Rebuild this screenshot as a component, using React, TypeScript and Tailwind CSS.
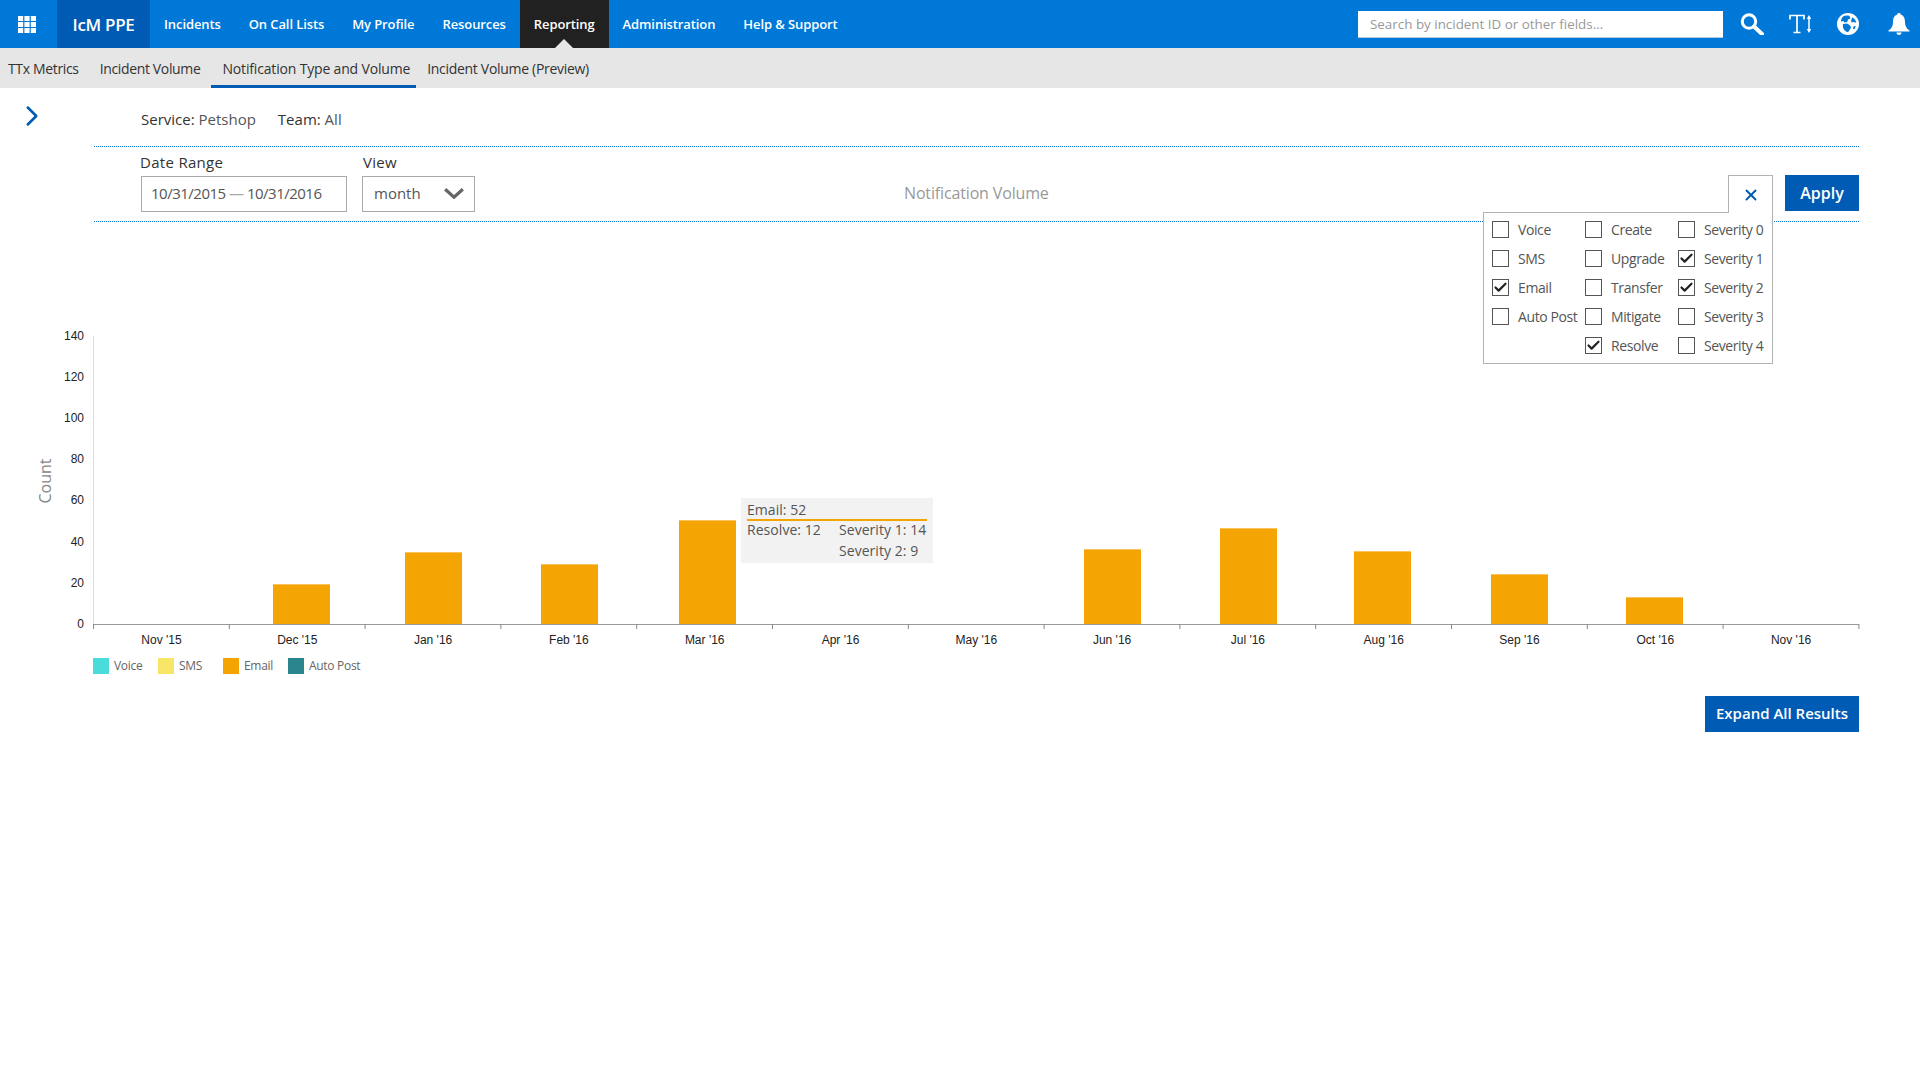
import { ChevronRight, X, Check } from 'lucide-react';

const navItems = ['Incidents', 'On Call Lists', 'My Profile', 'Resources', 'Reporting', 'Administration', 'Help & Support'];
const subItems = ['TTx Metrics', 'Incident Volume', 'Notification Type and Volume', 'Incident Volume (Preview)'];

const months = ["Nov '15", "Dec '15", "Jan '16", "Feb '16", "Mar '16", "Apr '16", "May '16", "Jun '16", "Jul '16", "Aug '16", "Sep '16", "Oct '16", "Nov '16"];
const bars = [
  { x: 273, top: 584 },
  { x: 405, top: 552 },
  { x: 541, top: 564 },
  { x: 679, top: 520 },
  { x: 1084, top: 549 },
  { x: 1220, top: 528 },
  { x: 1354, top: 551 },
  { x: 1491, top: 574 },
  { x: 1626, top: 597 },
];

const legend = [
  { label: 'Voice', color: 'bg-[#4adbdb]' },
  { label: 'SMS', color: 'bg-[#f7e668]' },
  { label: 'Email', color: 'bg-[#f5a503]' },
  { label: 'Auto Post', color: 'bg-[#2b858f]' },
];

const filters = [
  [{ label: 'Voice' }, { label: 'SMS' }, { label: 'Email', on: true }, { label: 'Auto Post' }],
  [{ label: 'Create' }, { label: 'Upgrade' }, { label: 'Transfer' }, { label: 'Mitigate' }, { label: 'Resolve', on: true }],
  [{ label: 'Severity 0' }, { label: 'Severity 1', on: true }, { label: 'Severity 2', on: true }, { label: 'Severity 3' }, { label: 'Severity 4' }],
];

const Waffle = () => (
  <svg width="18" height="17" viewBox="0 0 18 17" fill="white">
    {[0, 6, 12].map((y) =>
      [0, 6.4, 12.8].map((x) => <rect key={`${x}-${y}`} x={x} y={y} width="5.2" height="5" />),
    )}
  </svg>
);

const SearchIcon = () => (
  <svg width="24" height="22" viewBox="0 0 24 22" fill="none" stroke="white">
    <circle cx="9" cy="8.5" r="6.7" strokeWidth="3" />
    <path d="M14 13.5 L22 21" strokeWidth="4" strokeLinecap="round" />
  </svg>
);

const TextSizeIcon = () => (
  <svg width="24" height="20" viewBox="0 0 24 20" fill="none" stroke="white">
    <path d="M1 5.5V1.5H15V5.5M8 1.5V18.5M4.5 18.5H11.5" strokeWidth="1.7" />
    <path d="M20 3V17" strokeWidth="1.5" />
    <path d="M17.8 5L20 1L22.2 5ZM17.8 15L20 19L22.2 15Z" fill="white" stroke="none" />
  </svg>
);

const GlobeIcon = () => (
  <svg width="22" height="22" viewBox="0 0 22 22">
    <circle cx="11" cy="11" r="11" fill="white" />
    <path d="M6 3.6C8 2.4 10.5 2.2 12.5 3L13.5 5.5L11 6.5L10.2 9L7.5 9.5L6.5 8L4 8.5C4 6.6 4.8 4.8 6 3.6Z" fill="#0078d7" />
    <path d="M6 11L10 10.6L13.2 12.4L14 14.4L12.6 17L11 19.2C7.6 18.6 5.2 15 6 11Z" fill="#0078d7" />
    <path d="M15.4 4.2L18 6.4L19.4 9.8L16.6 9L14.4 9.4L14.2 7ZM16.4 13.4L18.8 13L17.6 16.2L16 15.8Z" fill="#0078d7" />
  </svg>
);

const BellIcon = () => (
  <svg width="22" height="22" viewBox="0 0 22 22" fill="white">
    <circle cx="11" cy="2" r="2" />
    <path d="M11 1.5C15.5 1.5 17 5 17 9C17 13 18.5 15.5 21.5 17.5V18.5H0.5V17.5C3.5 15.5 5 13 5 9C5 5 6.5 1.5 11 1.5Z" />
    <path d="M8.5 19.5H13.5C13.5 21 12.5 22 11 22C9.5 22 8.5 21 8.5 19.5Z" />
  </svg>
);

const ViewCaret = () => (
  <svg width="20" height="11" viewBox="0 0 20 11" fill="none" stroke="#666" strokeWidth="3.2">
    <path d="M1.2 1.2L10 9.2L18.8 1.2" />
  </svg>
);

const Box = ({ label, on }: { label: string; on?: boolean }) => (
  <div className="flex items-center h-[29px]">
    <div className="w-[17px] h-[17px] border-[1.5px] border-[#555] flex items-center justify-center">
      {on && <Check size={15} strokeWidth={3.5} className="text-[#222]" />}
    </div>
    <span className="ml-[9px] text-[14px] text-[#555] tracking-[-0.4px] whitespace-nowrap">{label}</span>
  </div>
);

const Chart = () => (
  <svg width="1920" height="330" viewBox="0 320 1920 330" className="block">
    <line x1="93.5" y1="336" x2="93.5" y2="624" stroke="#ddd" />
    {[140, 120, 100, 80, 60, 40, 20, 0].map((v, i) => (
      <text key={v} x="84" y={339.5 + i * 41.2} textAnchor="end" fontSize="12" fill="#222" fontFamily="'Liberation Sans', sans-serif">
        {v}
      </text>
    ))}
    <text transform="translate(51 481) rotate(-90)" textAnchor="middle" fontSize="16" fill="#888" fontFamily="'Open Sans', sans-serif">
      Count
    </text>
    {bars.map((b) => (
      <g key={b.x}>
        <rect x={b.x} y={b.top} width="57" height={624 - b.top} fill="#f5a503" />
        <rect x={b.x} y={b.top} width="57" height="1" fill="#fac35c" />
      </g>
    ))}
    <line x1="93" y1="624.5" x2="1859" y2="624.5" stroke="#999" strokeWidth="1" />
    {months.concat('').map((m, i) => {
      const x = 93.5 + i * 135.8;
      return (
        <g key={i}>
          <line x1={x} y1="624" x2={x} y2="629" stroke="#888" />
          {m && (
            <text x={x + 68} y="644" textAnchor="middle" fontSize="12" fill="#222" fontFamily="'Liberation Sans', sans-serif">
              {m}
            </text>
          )}
        </g>
      );
    })}
  </svg>
);

export default function App() {
  return (
    <div className="min-h-[1080px] bg-white font-['Open_Sans',sans-serif]">
      <header className="flex items-center h-12 bg-[#0078d7] text-white">
        <div className="w-[57px] flex pl-[18px]">
          <Waffle />
        </div>
        <div className="w-[93px] h-12 bg-[#005bb5] flex items-center justify-center pt-[1px] text-[17px] font-semibold tracking-[-0.3px]">IcM PPE</div>
        <nav className="flex h-12">
          {navItems.map((n) => (
            <div key={n} className={`relative flex items-center px-[14px] pt-[2px] text-[13px] font-semibold tracking-[-0.1px] ${n === 'Reporting' ? 'bg-[#212121]' : ''}`}>
              {n}
              {n === 'Reporting' && (
                <div className="absolute bottom-0 left-1/2 -ml-[9px] w-0 h-0 border-x-[9px] border-x-transparent border-b-[9px] border-b-[#e6e6e6]" />
              )}
            </div>
          ))}
        </nav>
        <div className="ml-auto flex items-center">
          <div className="w-[365px] h-[27px] bg-white flex items-center px-[12px] pt-[1px] text-[13.4px] text-[#999] border-b border-[#b3c9e0]">Search by incident ID or other fields...</div>
          <div className="ml-[17px] w-6"><SearchIcon /></div>
          <div className="ml-[25px] w-6"><TextSizeIcon /></div>
          <div className="ml-[24px] w-[22px]"><GlobeIcon /></div>
          <div className="ml-[29px] mr-[10px] w-[22px]"><BellIcon /></div>
        </div>
      </header>

      <div className="flex h-10 bg-[#e6e6e6] text-[14px] text-[#333] tracking-[-0.35px]">
        <div className="flex items-center whitespace-nowrap pl-2 pr-[10px] pt-[1px]">{subItems[0]}</div>
        <div className="flex items-center whitespace-nowrap px-[11px] pt-[1px]">{subItems[1]}</div>
        <div className="flex items-center whitespace-nowrap pl-[11px] pr-[6px] pt-[4px] border-b-[3px] border-[#005bb5] tracking-[-0.17px]">{subItems[2]}</div>
        <div className="flex items-center whitespace-nowrap px-[11px] pt-[1px] tracking-[-0.3px]">{subItems[3]}</div>
      </div>

      <div className="relative">
        <ChevronRight size={34} strokeWidth={1.8} className="absolute left-[15px] top-[11px] text-[#005bb5]" />
        <div className="pt-[21px] pl-[141px] h-[58px] flex items-start gap-[22px] text-[15px] text-[#333] leading-[20px]">
          <span>Service: <span className="text-[#555]">Petshop</span></span>
          <span>Team: <span className="text-[#555]">All</span></span>
        </div>
        <div className="relative ml-[94px] mr-[61px] h-[76px] border-y border-dotted border-[#0078d7]">
          <div className="flex pl-[46px] gap-[15px] pt-[5px]">
            <div>
              <div className="text-[15px] leading-[20px] text-[#333] tracking-[0.3px] mb-[4px]">Date Range</div>
              <div className="ml-[1px] w-[206px] h-[36px] border border-[#aaa] flex items-center pl-[9px] pb-[1px] text-[15px] text-[#555] tracking-[-0.5px]">
                <span>10/31/2015 <span className="text-[#aaa]">—</span> 10/31/2016</span>
              </div>
            </div>
            <div>
              <div className="text-[15px] leading-[20px] text-[#333] tracking-[0.3px] mb-[4px] pl-[1px]">View</div>
              <div className="w-[113px] h-[36px] border border-[#aaa] flex items-center justify-between pl-[11px] pr-[10px] pb-[1px] text-[15px] text-[#555]">
                month
                <ViewCaret />
              </div>
            </div>
          </div>
          <div className="absolute left-[810px] top-[35px] text-[16px] leading-[22px] text-[#999] tracking-[-0.15px]">Notification Volume</div>
          <div className="absolute right-0 top-[28px] w-[74px] h-[36px] bg-[#005bb5] text-white text-[16px] font-semibold flex items-center justify-center pb-[1px]">Apply</div>
          <div className="absolute left-[1634px] top-[28px] w-[45px] h-[38px] bg-white border-x border-t border-[#b3b3b3] z-10 flex items-center justify-center">
            <X size={18} strokeWidth={2.5} className="text-[#005bb5]" />
          </div>
          <div className="absolute left-[1389px] top-[65px] w-[290px] h-[152px] bg-white border border-[#b3b3b3] flex pl-2 pt-[2px]">
            {filters.map((col, i) => (
              <div key={i} className="w-[93px]">
                {col.map((f) => (
                  <Box key={f.label} label={f.label} on={f.on} />
                ))}
              </div>
            ))}
          </div>
        </div>

        <div className="relative mt-[98px]">
          <Chart />
          <div className="absolute left-[741px] top-[178px] w-[192px] h-[65px] bg-[#f2f2f2] text-[14px] text-[#555] tracking-[0.05px] leading-[21px] px-[6px]">
            <div className="border-b-2 border-[#f5a503] h-[23px] pt-[1px]">Email: 52</div>
            <div className="flex -mt-[2px]">
              <div className="w-[92px]">Resolve: 12</div>
              <div>Severity 1: 14<br />Severity 2: 9</div>
            </div>
          </div>
        </div>

        <div className="flex mt-[8px] pl-[93px]">
          {legend.map((l) => (
            <div key={l.label} className="flex items-center w-[65px] h-4 whitespace-nowrap">
              <div className={`w-4 h-4 shrink-0 ${l.color}`} />
              <span className="ml-[5px] text-[12px] text-[#666] tracking-[-0.3px]">{l.label}</span>
            </div>
          ))}
        </div>

        <div className="flex justify-end mt-[22px] mr-[61px]">
          <div className="w-[154px] h-[36px] bg-[#005bb5] text-white text-[15px] font-semibold flex items-center justify-center pb-[1px]">Expand All Results</div>
        </div>
      </div>
    </div>
  );
}
